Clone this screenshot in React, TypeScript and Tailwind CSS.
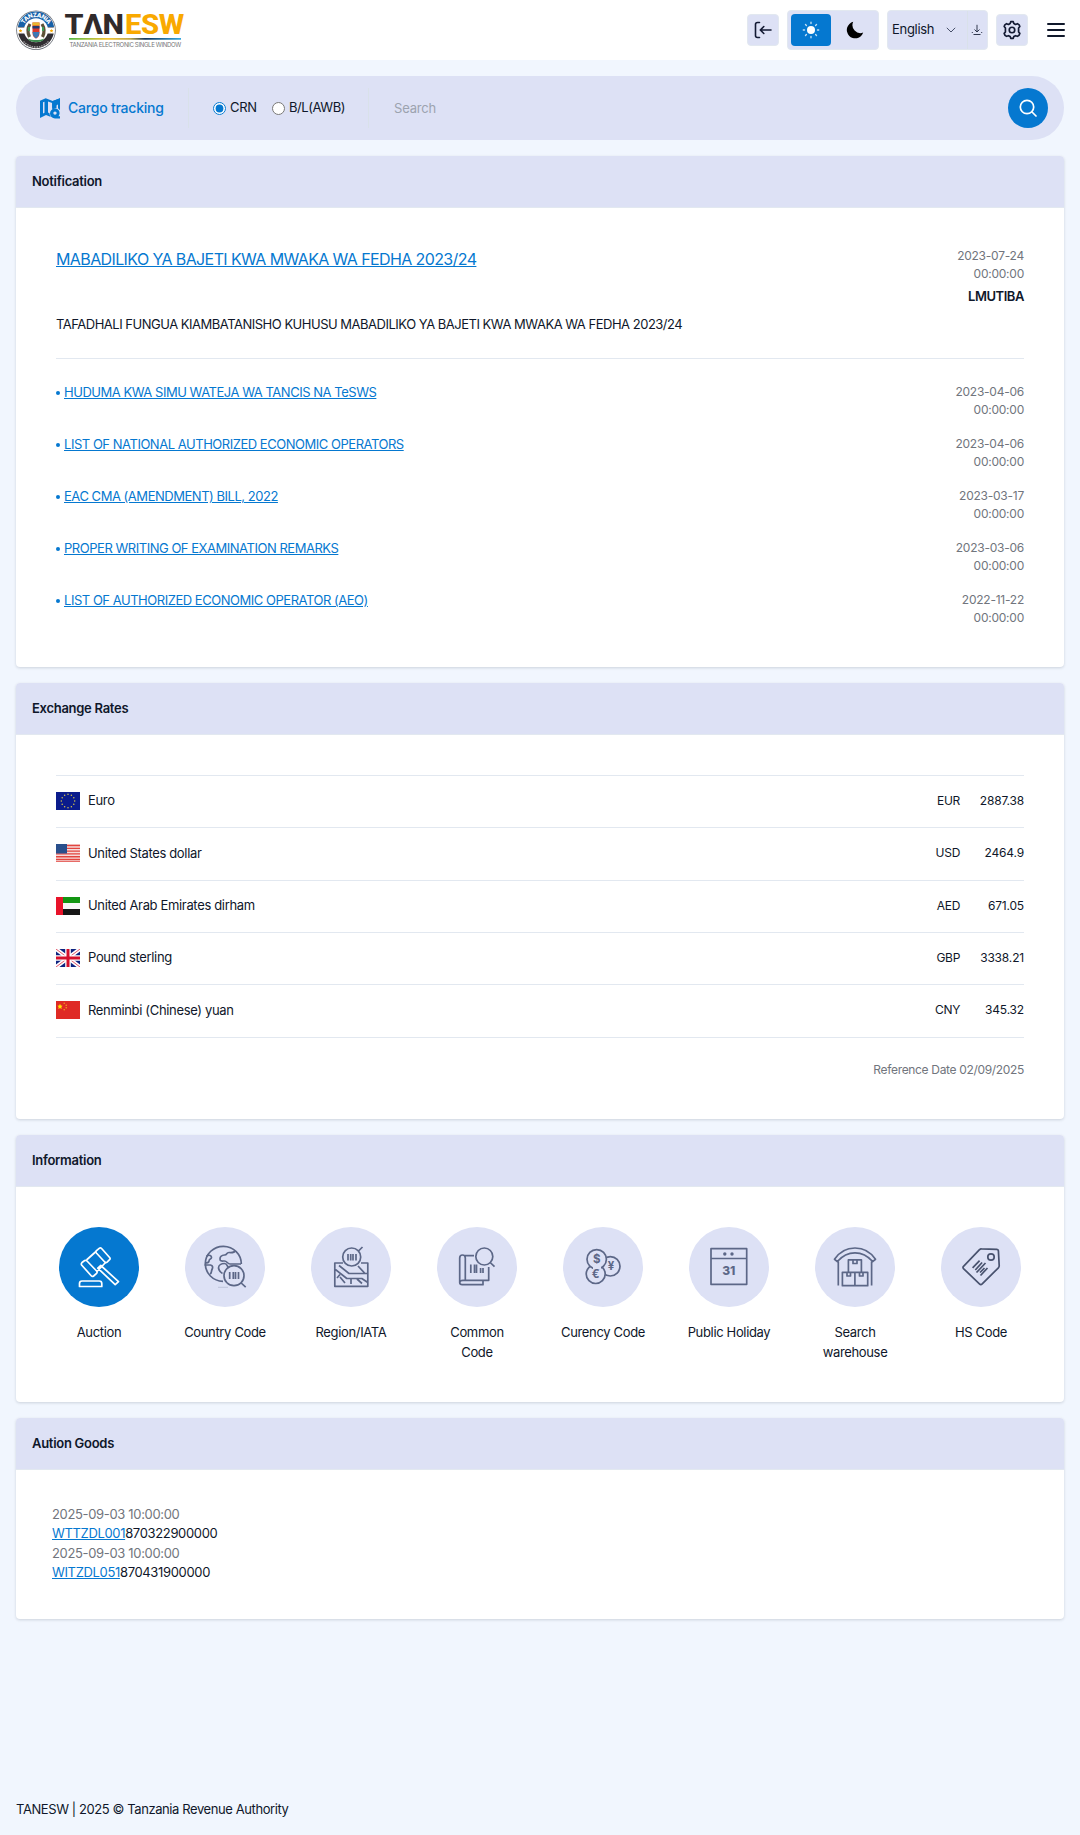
import React from "react";

const notices = [
  ["HUDUMA KWA SIMU WATEJA WA TANCIS NA TeSWS", "2023-04-06"],
  ["LIST OF NATIONAL AUTHORIZED ECONOMIC OPERATORS", "2023-04-06"],
  ["EAC CMA (AMENDMENT) BILL, 2022", "2023-03-17"],
  ["PROPER WRITING OF EXAMINATION REMARKS", "2023-03-06"],
  ["LIST OF AUTHORIZED ECONOMIC OPERATOR (AEO)", "2022-11-22"],
];

function Card({ title, className, children }: { title: string; className: string; children: React.ReactNode }) {
  return (
    <section className={`flex flex-col rounded bg-white shadow-[0_1px_3px_rgba(15,23,42,0.16)] ${className}`}>
      <h2 className="flex h-[52px] shrink-0 items-center rounded-t border-b border-[#e2e8f0] bg-[#dde1f5] px-4 text-[13px] font-semibold tracking-[-0.28px]">
        {title}
      </h2>
      {children}
    </section>
  );
}

function Logo() {
  return (
    <svg width="200" height="60" viewBox="0 0 200 60" className="block">
      <defs>
        <linearGradient id="rule" x1="0" x2="1">
          <stop offset="0" stopColor="#4fb848" />
          <stop offset="0.35" stopColor="#f5c431" />
          <stop offset="0.55" stopColor="#b9a54a" />
          <stop offset="0.68" stopColor="#15355c" />
          <stop offset="1" stopColor="#35a8e0" />
        </linearGradient>
        <path id="arc" d="M22.6 30.5a13.4 13.4 0 0 1 26.8 0" />
      </defs>
      <circle cx="36" cy="30.2" r="19.8" fill="#6b7078" />
      <circle cx="36" cy="30.2" r="19" fill="#fff" />
      <circle cx="36" cy="30.2" r="18" fill="#302d31" />
      <path d="M18 27a18.2 18.2 0 0 1 36 0z" fill="#1761a8" />
      <path d="M18 27.5h36v6H18z" fill="#fff" />
      <circle cx="36" cy="30.2" r="12" fill="#fff" />
      <text fill="#fff" fontFamily="Inter, sans-serif" fontSize="6" fontWeight="800">
        <textPath href="#arc" startOffset="50%" textAnchor="middle" textLength="29">TANZANIA</textPath>
      </text>
      <path d="M20.5 29l.6 1.1 1.2.2-.9.9.2 1.2-1.1-.6-1.1.6.2-1.2-.9-.9 1.2-.2zM51.5 29l.6 1.1 1.2.2-.9.9.2 1.2-1.1-.6-1.1.6.2-1.2-.9-.9 1.2-.2z" fill="#f5a800" />
      <path d="M30 24c-2.500 4-2.500 9-.5 13M42 24c2.500 4 2.500 9 .5 13" fill="none" stroke="#5d5238" strokeWidth="3.200" />
      <path d="M29 27v4M43 27v4" stroke="#3d9a58" strokeWidth="2" />
      <path d="M32.500 22.500h7v10.500c0 3-1.500 4.500-3.500 5.500-2-1-3.500-2.500-3.500-5.500z" fill="#d8372d" />
      <path d="M32.500 22.500h7v3h-7z" fill="#e8b72e" />
      <path d="M32.500 26h7v2.500h-7z" fill="#243a70" />
      <path d="M32.500 32h7l-1 4-2.500 2.500-2.500-2.500z" fill="#3c78b5" />
      <path d="M28 38.500c4 2 12 2 16 0l-1 2c-4 2-10 2-14 0z" fill="#3d8b50" />
      <path d="M23.500 41.500a17 17 0 0 0 25 0" fill="none" stroke="#99979a" strokeWidth="1.600" strokeDasharray="1.500 .9" />
      <g fontFamily="Roboto, sans-serif" fontSize="28.500" fontWeight="800">
        <text x="64.500" y="34" fill="#302a2b" textLength="59" lengthAdjust="spacingAndGlyphs">TΛN</text>
        <text x="125" y="34" fill="#f9a900" textLength="59" lengthAdjust="spacingAndGlyphs">ESW</text>
      </g>
      <path d="M69 38h112v1.700H69z" fill="url(#rule)" />
      <text x="69.500" y="47.300" fill="#77777a" fontFamily="Inter, sans-serif" fontSize="6" textLength="111.500" lengthAdjust="spacingAndGlyphs">
        TANZANIA ELECTRONIC SINGLE WINDOW
      </text>
    </svg>
  );
}

function Header() {
  const box = "flex h-8 w-8 items-center justify-center rounded border border-[#e2e8f0] bg-[#dde1f5]";
  return (
    <header className="flex h-[60px] items-center justify-between bg-white pr-[15px]">
      <Logo />
      <div className="flex items-center">
        <button className={box}>
          <svg width="20" height="20" viewBox="0 0 20 20" fill="none" stroke="#131a33" strokeWidth="1.600" strokeLinecap="round" strokeLinejoin="round">
            <path d="M6.500 2.500H4.500Q2.500 2.500 2.500 4.500v11q0 2 2 2h2M18 10H7.500M10.800 6.500 7.300 10l3.500 3.500" />
          </svg>
        </button>
        <div className="ml-2 flex h-10 w-[92px] items-center rounded border border-[#e2e8f0] bg-[#dde1f5] px-[3px]">
          <button className="flex h-8 w-10 items-center justify-center rounded bg-[#0578d0]">
            <svg width="18" height="18" viewBox="0 0 18 18" fill="#fff">
              <circle cx="9" cy="9" r="4" />
              <g stroke="#fff" strokeWidth="1.400" strokeLinecap="round" opacity=".75">
                <path d="M9 1.300v1.200M9 15.500v1.200M1.300 9h1.200M15.500 9h1.200M3.500 3.500l.9.900M13.600 13.600l.9.900M3.500 14.500l.9-.9M13.600 4.400l.9-.9" />
              </g>
            </svg>
          </button>
          <svg className="ml-[15px]" width="18" height="18" viewBox="0 0 18 18">
            <path d="M7.200.8A8.400 8.400 0 1 0 17.200 11.600 8 8 0 0 1 7.200.8z" fill="#000" />
          </svg>
        </div>
        <div className="ml-2 flex h-10 w-[101px] items-center rounded border border-[#e2e8f0] bg-[#dde1f5]">
          <div className="flex h-full w-20 items-center justify-between border-r border-[#d9e1ea] pr-[11px] pl-1 text-[13px] tracking-[-0.3px]">
            <span>English</span>
            <svg width="10" height="6" viewBox="0 0 10 6" fill="none" stroke="#475069" strokeWidth="1"><path d="m.8.8 4.200 4.200L9.200.8" /></svg>
          </div>
          <svg className="ml-[3px]" width="12" height="12" viewBox="0 0 12 12" fill="none" stroke="#30384f" strokeWidth="1">
            <path d="M6 .8v7M3.500 5.500 6 8l2.500-2.500M2.500 10.500h7M.8 8.500h1M10.200 8.500h1" />
          </svg>
        </div>
        <button className={`ml-2 ${box}`}>
          <svg width="20" height="20" viewBox="0 0 24 24" fill="none" stroke="#131a33" strokeWidth="2" strokeLinejoin="round">
            <path d="M9.800 4.200 10.500 2h3l.7 2.200 2 1.100 2.300-.9 2.100 1.500.8 1.900-1.500 1.800v4.800l1.500 1.700-.9 2.200-2 1.300-2.300-.8-2 1.100-.7 2.100h-3l-.7-2.100-2-1.100-2.300.8-2-1.300-.9-2.200 1.500-1.700V9.600L2.600 7.800l.8-1.900 2.100-1.500 2.300.9z" />
            <circle cx="12" cy="12" r="3.300" />
          </svg>
        </button>
        <svg className="ml-[19px]" width="18" height="14" viewBox="0 0 18 14" stroke="#10182b" strokeWidth="2" strokeLinecap="round">
          <path d="M1 1h16M1 7h16M1 13h16" />
        </svg>
      </div>
    </header>
  );
}

function SearchBar() {
  return (
    <div className="mt-4 flex h-16 items-center rounded-full bg-[#dde1f5] pr-4 pl-6">
      <svg width="20" height="21" viewBox="0 0 20 21" fill="#0578d0">
        <path fillRule="evenodd" d="M0 2.700 5.700.3l7 2.600L20 .3v12a6 6 0 0 0-2-2V4.200l-2.500 1V9a6 6 0 0 0-3.300 1.200V5L8 3.400v11.200l1.500.7c0 1.500.6 2.800 1.500 3.700l-5-2L0 20zM3 4.300v11.200l1.500-.7V3.700z" />
        <path d="M12.200 3.200 20 .3v4.400l-3.500 2.800V10l-4.300 1.500z" />
        <path fillRule="evenodd" d="M15 10.500a4.600 4.600 0 0 1 4.600 4.600c0 1.200-.5 2.300-1.200 3.100l1.600.1V20.500h-5a5 5 0 0 1 0-10zm0 2.900a1.700 1.700 0 1 0 0 3.400 1.700 1.700 0 0 0 0-3.400z" />
      </svg>
      <span className="ml-2 w-[120px] text-sm font-medium tracking-[-0.22px] text-[#0578d0]">Cargo tracking</span>
      <div className="flex h-10 w-[181px] items-center border-x border-[#d9e1ea] pl-[23.5px] text-[13px]">
        <input type="radio" name="kind" defaultChecked className="mr-[4.5px] h-[13px] w-[13px] accent-[#0578d0]" />
        <span className="w-[41.5px] tracking-[-0.3px]">CRN</span>
        <input type="radio" name="kind" className="mr-[4.5px] h-[13px] w-[13px] accent-[#0578d0]" />
        <span className="tracking-[-0.45px]">B/L(AWB)</span>
      </div>
      <input placeholder="Search" className="mt-[2px] ml-[25px] min-w-0 flex-1 bg-transparent text-[13px] tracking-[-0.2px] outline-none placeholder:text-[#9ca3af]" />
      <button className="flex h-10 w-10 items-center justify-center rounded-full bg-[#0578d0]">
        <svg width="18" height="18" viewBox="0 0 18 18" fill="none" stroke="#fff" strokeWidth="1.700" strokeLinecap="round">
          <circle cx="8" cy="8" r="6.700" /><path d="m13 13 4 4" />
        </svg>
      </button>
    </div>
  );
}

const star = (n: number, cx: number, cy: number, r: number) =>
  Array.from({ length: n }, (_, i) => {
    const a = (i * 2 * Math.PI) / n;
    return <circle key={i} cx={cx + r * Math.sin(a)} cy={cy - r * Math.cos(a)} r=".75" fill="#d8c64c" />;
  });

const flags: Record<string, React.ReactNode> = {
  EUR: (<><path d="M0 0h24v18H0z" fill="#0b1c8c" />{star(12, 12, 9, 6.7)}</>),
  USD: (
    <>
      <path d="M0 0h24v18H0z" fill="#f6dcdc" />
      <path d="M0 1.500h24M0 4.300h24M0 7.100h24M0 9.900h24M0 12.700h24M0 15.500h24M0 17.800h24" stroke="#e2453f" strokeWidth="1.350" />
      <path d="M0 0h11v9.500H0z" fill="#294f8c" />
    </>
  ),
  AED: (<><path d="M0 0h24v6H0z" fill="#119511" /><path d="M0 6h24v6H0z" fill="#f6f6f6" /><path d="M0 12h24v6H0z" fill="#161616" /><path d="M0 0h7v18H0z" fill="#e8132a" /></>),
  GBP: (
    <>
      <path d="M0 0h24v18H0z" fill="#0d2380" />
      <path d="m0 0 24 18M24 0 0 18" stroke="#fff" strokeWidth="4" />
      <path d="m0 0 24 18M24 0 0 18" stroke="#e2566a" strokeWidth="1" />
      <path d="M12 0v18M0 9h24" stroke="#fff" strokeWidth="5.600" />
      <path d="M12 0v18M0 9h24" stroke="#d5102c" strokeWidth="3" />
    </>
  ),
  CNY: (
    <>
      <path d="M0 0h24v18H0z" fill="#df2a25" />
      <path d="m4 2.800.8 1.700 1.800.2-1.300 1.300.4 1.900L4 7l-1.700.9.4-1.900-1.300-1.300 1.800-.2z" fill="#ffe600" />
      <g fill="#f4b020"><circle cx="8.200" cy="2.200" r=".7" /><circle cx="10.200" cy="4.200" r=".7" /><circle cx="10.200" cy="6.800" r=".7" /><circle cx="8.200" cy="8.800" r=".7" /></g>
    </>
  ),
};

const rates = [
  ["Euro", "EUR", "2887.38"],
  ["United States dollar", "USD", "2464.9"],
  ["United Arab Emirates dirham", "AED", "671.05"],
  ["Pound sterling", "GBP", "3338.21"],
  ["Renminbi (Chinese) yuan", "CNY", "345.32"],
];

const info: [string, React.ReactNode][] = [
  ["Auction", (
    <>
      <path d="M23 35.500l2.700-2q1.300-.6 2.300.5l9.600 10q1 1.300 0 2.300l-3 2.700q-1.300 1-2.400-.2L22.800 38.200q-1-1.500.2-2.700zM37.500 23.700l2.700-2.400q1.300-1 2.400.2l8 9q1 1.200 0 2.200l-2.500 2.500q-1.300 1-2.400-.2l-8.300-9q-1-1.200.1-2.300z" />
      <path d="M27.500 33l9.500-8.500M38 44.500l9-9.500M38.800 41.200l3-2.700L59.500 54.600l-3.300 3zM20.500 59.500h22.300v-3q0-2.500-2.500-2.500H23q-2.500 0-2.500 2.500z" />
    </>
  )],
  ["Country Code", (
    <>
      <path d="M38 54.300A18 17.500 0 1 1 56.300 37" />
      <path d="M21.500 29c3-1.500 5-.5 5 1.500s-2.500 1.200-2.500 3.500c0 1.500-2.500 2-4 2M19.500 38h6c2.500.5 2.500 2.500 1.500 4.500s0 3.500-2 4.500M50 24c-1 2-3 1.500-6 1.500s-1.500 2.300-4.500 2.500-4.500 1.500-4.500 4 2 2 4.500 2 3 3 5.500 3h11M37.500 46.500c-2-1-3.500-2.500-4-5.500 0-3 3-4.500 6-4.500s2.500 3 4 4" />
      <circle cx="49" cy="48.700" r="10" fill="#dde1f5" />
      <path d="M56.200 56l4.500 4.200" /><path d="M33 60.300h10" strokeWidth=".8" opacity=".3" />
      <path d="M44.700 45v7M48.300 45v7M50.500 45v7M53.500 45v7" />
    </>
  )],
  ["Region/IATA", (
    <>
      <path d="M32 36h-8.200v23.300h33V36H50M28 38.500l10 8h18M23.800 42l12 9.500h15l6 4M47 39l7 7.500M29 47.500l-3 3.500M29 50l5 6M40 52v5M46 52l5 4.500" />
      <circle cx="40.700" cy="30" r="9" fill="#dde1f5" />
      <path d="M47.500 24l4-4M37 27v6.500M39.700 27v6.500M42 27v6.500M45 27v6.500" />
    </>
  )],
  ["Common Code", (
    <>
      <path d="M37 28.700h-9.300M28.300 53V31q0-3-2.800-3t-2.800 3v24.500q0 2.200 2.500 2.200H46v-4M51.700 40v13.300H26q-3.200 0-3.200 2.200M28.300 53v-2" />
      <circle cx="47.300" cy="29.500" r="8.500" /><path d="M53.200 35.500l4.300 4.200M33.800 37.500V46M37.500 37.500V46M39.500 37.500V46M43.600 41v5M46 41v5" />
    </>
  )],
  ["Curency Code", (
    <>
      <circle cx="47.300" cy="39.300" r="9.700" />
      <circle cx="32.700" cy="47" r="9.500" fill="#dde1f5" />
      <circle cx="33.700" cy="32.300" r="9.700" fill="#dde1f5" />
      <path d="M30 39.500h8v3h-8z" fill="#dde1f5" stroke="none" />
      <g fill="#5c6787" stroke="none" fontFamily="Inter, sans-serif" fontSize="11.500" fontWeight="700" textAnchor="middle">
        <text x="33.700" y="36">$</text><text x="47.800" y="43.300">¥</text><text x="32.500" y="51.200">€</text>
      </g>
    </>
  )],
  ["Public Holiday", (
    <>
      <path d="M22 21.700h35.700v35.600H22zM22 31.500h35.700" />
      <g fill="#5c6787" stroke="none">
        <circle cx="35.800" cy="27" r="1.700" /><circle cx="43" cy="27" r="1.700" />
        <text x="39.600" y="48" fontFamily="Inter, sans-serif" fontSize="12" fontWeight="800" textAnchor="middle">31</text>
      </g>
    </>
  )],
  ["Search warehouse", (
    <path d="M19.500 32.300Q27 21 40 21t20.500 11.300l-2.800 2.200Q50 25.800 40 25.800T22.300 34.500zM23.300 34.500V58.500M56.600 34.500V58.500M33.400 32.800h13v12.500h-13zM27.400 45.300h25.300v13.400H27.400zM39.900 45.300v13.400M38 33v3.500h4V33M32 45.500V49h3.500v-3.500M44.500 45.500V49H48v-3.500" />
  )],
  ["HS Code", (
    <g stroke="#48526e">
      <path d="M22.500 39.300 38.500 22.700q.8-1 2-.9l15.400.6q1.500.1 1.500 1.500l.8 14.700q.1 1.300-.8 2.200L41.200 56.900q-1.400 1.300-2.800 0L22.500 41.600q-1-1.200 0-2.300z" />
      <circle cx="50" cy="30" r="3.200" /><path d="M31.600 40.800l7-7.200M34.300 43l6.800-7.500M35.500 45.500l9-9.500M39 45.500l4.500-4.500M39.500 48.500l7-7.500" />
    </g>
  )],
];

const goods = [
  ["WTTZDL001", "870322900000"],
  ["WITZDL051", "870431900000"],
];

const stamp = "w-20 text-right text-xs leading-[18px] tracking-[-0.24px] text-[#71757d]";

export default function App() {
  return (
    <div className="flex h-[1835px] w-[1080px] flex-col bg-[#f1f6fe] font-['Inter',sans-serif] text-[13px] leading-[19.5px] tracking-[-0.34px] text-[#0f172a]">
      <Header />
      <main className="flex flex-1 flex-col gap-4 px-4">
        <SearchBar />

        <Card title="Notification" className="h-[511px]">
          <div className="mx-10 mt-[39px] flex h-[112px] justify-between border-b border-[#e2e8f0]">
            <div>
              <a className="block text-base leading-6 tracking-[-0.61px] text-[#0578d0] underline">MABADILIKO YA BAJETI KWA MWAKA WA FEDHA 2023/24</a>
              <p className="mt-11 tracking-[-0.49px]">TAFADHALI FUNGUA KIAMBATANISHO KUHUSU MABADILIKO YA BAJETI KWA MWAKA WA FEDHA 2023/24</p>
            </div>
            <div className={stamp}>
              2023-07-24<br />00:00:00
              <p className="mt-1 text-[13px] font-semibold tracking-[-0.45px] text-[#0f172a]">LMUTIBA</p>
            </div>
          </div>
          <ul className="mx-10 mt-6 flex flex-col gap-4">
            {notices.map(([title, date]) => (
              <li key={title} className="flex h-9 justify-between">
                <span className="flex h-5 items-center gap-1 tracking-[-0.47px] text-[#0578d0]">
                  <i className="h-1 w-1 rounded-full bg-[#0578d0]" />
                  <a className="underline">{title}</a>
                </span>
                <span className={stamp}>{date}<br />00:00:00</span>
              </li>
            ))}
          </ul>
        </Card>

        <Card title="Exchange Rates" className="h-[436px]">
          <ul className="mx-10 mt-10 border-t border-[#e2e8f0]">
            {rates.map(([name, code, rate]) => (
              <li key={code} className="h-[52.35px] border-b border-[#e2e8f0] pt-[15.6px]">
                <div className="flex h-[19px] items-center">
                  <svg width="24" height="18" viewBox="0 0 24 18" className="mr-2">{flags[code]}</svg>
                  <span className="flex-1">{name}</span>
                  <span className="text-xs tracking-[-0.3px]">{code}</span>
                  <span className="w-16 text-right text-xs tracking-[-0.17px]">{rate}</span>
                </div>
              </li>
            ))}
          </ul>
          <p className="mx-10 mt-[23px] text-right text-xs leading-[18px] tracking-[-0.33px] text-[#71757d]">Reference Date 02/09/2025</p>
        </Card>

        <Card title="Information" className="h-[267px]">
          <div className="mx-5 mt-10 grid grid-cols-8">
            {info.map(([label, icon], i) => (
              <div key={label} className="flex flex-col items-center">
                <div className={`h-20 w-20 rounded-full ${i === 0 ? "bg-[#0578d0]" : "bg-[#dde1f5]"}`}>
                  <svg width="80" height="80" viewBox="0 0 80 80" fill="none" stroke={i === 0 ? "#fff" : "#5c6787"} strokeWidth="1.700" strokeLinejoin="round">{icon}</svg>
                </div>
                <span className={`mt-4 text-center ${label === "Common Code" || label === "Search warehouse" ? "w-20" : "w-[86px]"}`}>{label}</span>
              </div>
            ))}
          </div>
        </Card>

        <Card title="Aution Goods" className="h-[201px]">
          <div className="mx-9 mt-[34.8px]">
            {goods.map(([id, code]) => (
              <div key={id}>
                <p className="text-[#71757d]">2025-09-03 10:00:00</p>
                <p><a className="text-[#0578d0] underline">{id}</a>{code}</p>
              </div>
            ))}
          </div>
        </Card>
      </main>
      <footer className="h-[35px] px-4 tracking-[-0.41px]">TANESW | 2025 © Tanzania Revenue Authority</footer>
    </div>
  );
}
